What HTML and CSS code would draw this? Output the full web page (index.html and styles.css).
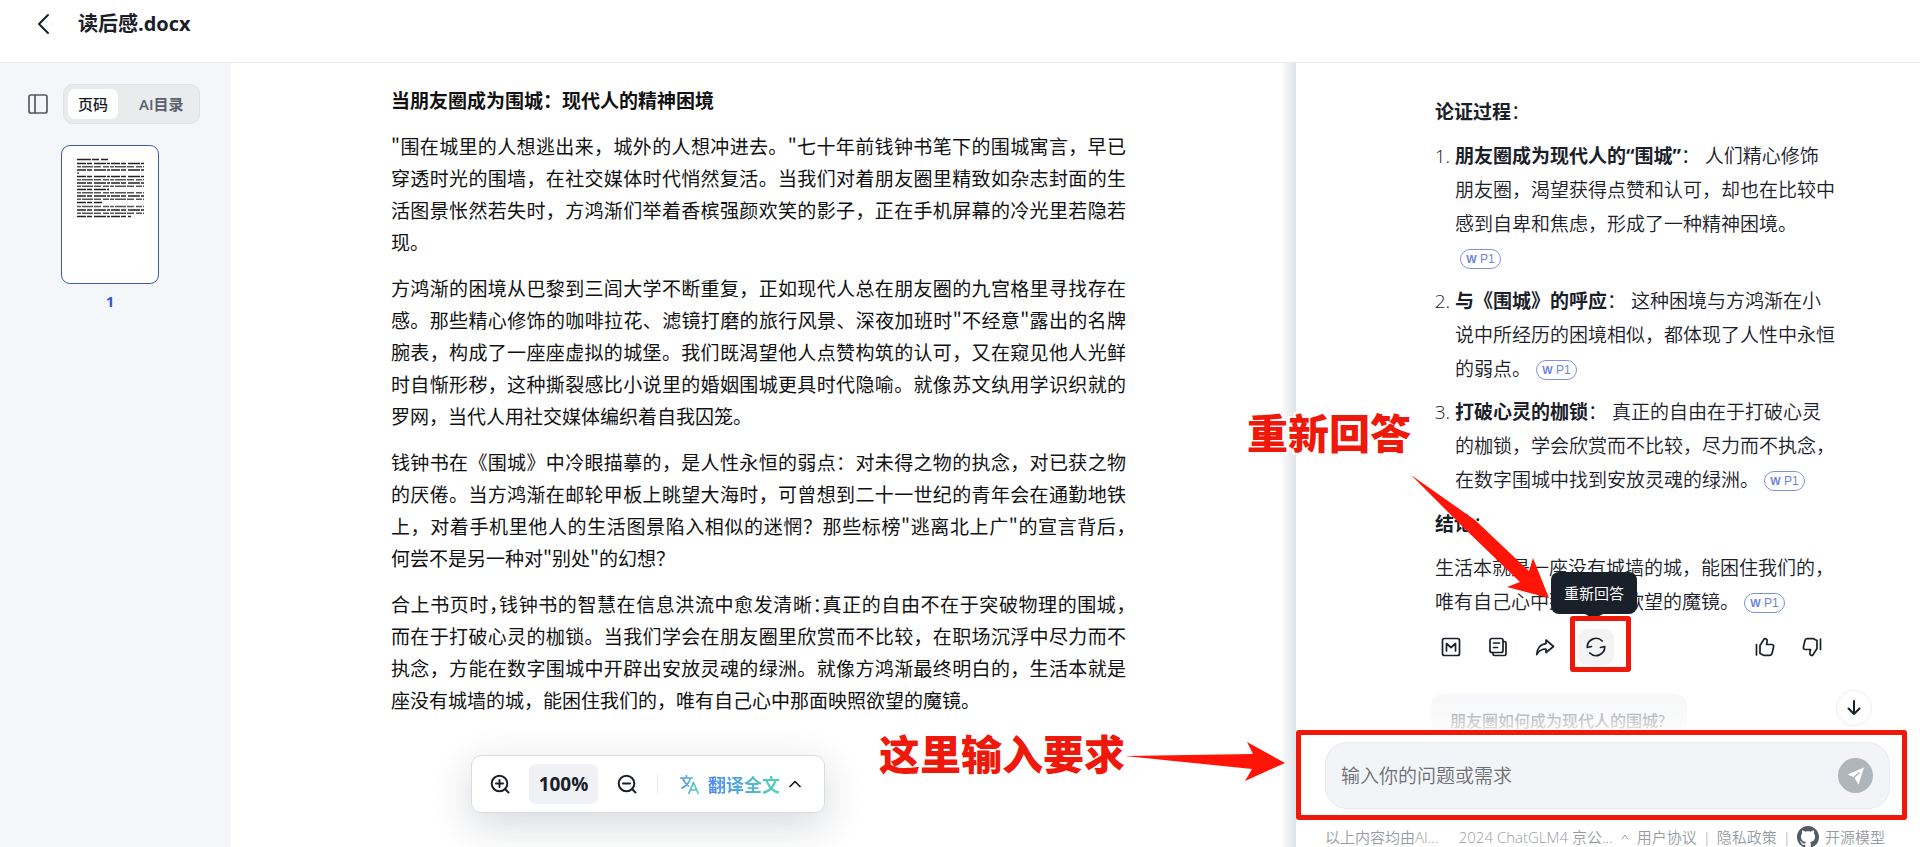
FILE: index.html
```html
<!DOCTYPE html>
<html lang="zh-CN">
<head>
<meta charset="utf-8">
<title>读后感.docx</title>
<link rel="stylesheet" href="styles.css">
</head>
<body>
<header class="topbar">
  <button class="icon-btn back" aria-label="返回"><svg width="14" height="22" viewBox="0 0 14 22"><path d="M12 2 3 11l9 9"/></svg></button>
  <h1 class="file-name">读后感.docx</h1>
</header>
<div class="workspace">
  <div class="reader">
    <aside class="sidebar">
      <div class="side-head">
        <button class="icon-btn panel-toggle" aria-label="侧栏"><svg width="20" height="20" viewBox="0 0 20 20"><rect x="1" y="1" width="18" height="18" rx="2"/><path d="M7 1v18"/></svg></button>
        <div class="tabs">
          <button class="tab tab-active">页码</button>
          <button class="tab">AI目录</button>
        </div>
      </div>
      <a class="thumb" href="#page-1" aria-label="第 1 页">
        <svg width="68" height="60" viewBox="0 0 68 60">
          <path class="t-head" d="M0 1.500H31"/>
          <path class="t-a" d="M0 5.500H67M0 12H67M0 18.500H67M0 25H67M0 31.500H32M0 38H67M0 44.500H25M0 52H67M0 58.500H54"/>
          <path class="t-b" d="M0 8.700H67M0 15H2M0 21.700H67M0 28.300H67M0 34.700H67M0 41.300H67M0 48.500H67M0 55.300H67"/>
        </svg>
      </a>
      <div class="thumb-no">1</div>
    </aside>
    <main class="doc" id="page-1">
      <h2>当朋友圈成为围城：现代人的精神困境</h2>
      <p><span>"围在城里的人想逃出来，城外的人想冲进去。"七十年前钱钟书笔下的围城寓言，早已</span><span>穿透时光的围墙，在社交媒体时代悄然复活。当我们对着朋友圈里精致如杂志封面的生</span><span>活图景怅然若失时，方鸿渐们举着香槟强颜欢笑的影子，正在手机屏幕的冷光里若隐若</span><span>现。</span></p>
      <p><span>方鸿渐的困境从巴黎到三闾大学不断重复，正如现代人总在朋友圈的九宫格里寻找存在</span><span>感。那些精心修饰的咖啡拉花、滤镜打磨的旅行风景、深夜加班时"不经意"露出的名牌</span><span>腕表，构成了一座座虚拟的城堡。我们既渴望他人点赞构筑的认可，又在窥见他人光鲜</span><span>时自惭形秽，这种撕裂感比小说里的婚姻围城更具时代隐喻。就像苏文纨用学识织就的</span><span>罗网，当代人用社交媒体编织着自我囚笼。</span></p>
      <p><span>钱钟书在《围城》中冷眼描摹的，是人性永恒的弱点：对未得之物的执念，对已获之物</span><span>的厌倦。当方鸿渐在邮轮甲板上眺望大海时，可曾想到二十一世纪的青年会在通勤地铁</span><span>上，对着手机里他人的生活图景陷入相似的迷惘？那些标榜"逃离北上广"的宣言背后<i>，</i></span><span>何尝不是另一种对"别处"的幻想？</span></p>
      <p><span>合上书页时<i>，</i>钱钟书的智慧在信息洪流中愈发清晰<i>：</i>真正的自由不在于突破物理的围城<i>，</i></span><span>而在于打破心灵的枷锁。当我们学会在朋友圈里欣赏而不比较，在职场沉浮中尽力而不</span><span>执念，方能在数字围城中开辟出安放灵魂的绿洲。就像方鸿渐最终明白的，生活本就是</span><span>座没有城墙的城，能困住我们的，唯有自己心中那面映照欲望的魔镜。</span></p>
    </main>
    <div class="splitter"></div>
    <div class="toolbar">
      <button class="icon-btn" aria-label="放大"><svg width="20" height="20" viewBox="0 0 20 20"><circle cx="9.500" cy="9.500" r="7.800"/><path d="M15 15l3.500 3.500M9.500 6v7M6 9.500h7"/></svg></button>
      <button class="zoom-value">100%</button>
      <button class="icon-btn" aria-label="缩小"><svg width="20" height="20" viewBox="0 0 20 20"><circle cx="9.500" cy="9.500" r="7.800"/><path d="M15 15l3.500 3.500M6 9.500h7"/></svg></button>
      <span class="divider"></span>
      <button class="translate">
        <svg width="19" height="19" viewBox="0 0 19 19"><defs><linearGradient id="tg" x1="0" x2="1"><stop offset="0" stop-color="#5b92ee"/><stop offset="1" stop-color="#54d1b4"/></linearGradient></defs><path stroke="url(#tg)" d="M.5 3h12M6.500.5V3M2 13c5-2.500 7.500-5.500 8.300-10M2.800 3c1.200 4 3 6 5.700 8M8.800 18.500 13.500 7.500l4.700 11M10.500 15h6"/></svg>
        <span>翻译全文</span>
        <svg class="caret" width="12" height="8" viewBox="0 0 12 8"><path d="M1 6.500 6 1.500l5 5"/></svg>
      </button>
    </div>
  </div>
  <section class="chat">
    <div class="messages">
      <div class="answer">
        <p><strong>论证过程</strong>：</p>
        <ol>
          <li><strong>朋友圈成为现代人的“围城”</strong>： 人们精心修饰<br>朋友圈，渴望获得点赞和认可，却也在比较中<br>感到自卑和焦虑，形成了一种精神困境。<br><a class="ref" href="#page-1"><b>W</b> P1</a></li>
          <li><strong>与《围城》的呼应</strong>： 这种困境与方鸿渐在小<br>说中所经历的困境相似，都体现了人性中永恒<br>的弱点。<a class="ref" href="#page-1"><b>W</b> P1</a></li>
          <li><strong>打破心灵的枷锁</strong>： 真正的自由在于打破心灵<br>的枷锁，学会欣赏而不比较，尽力而不执念，<br>在数字围城中找到安放灵魂的绿洲。<a class="ref" href="#page-1"><b>W</b> P1</a></li>
        </ol>
        <p><strong>结论</strong>：</p>
        <p>生活本就是一座没有城墙的城，能困住我们的，<br>唯有自己心中那面映照欲望的魔镜。<a class="ref" href="#page-1"><b>W</b> P1</a></p>
      </div>
      <div class="actions">
        <button class="icon-btn" aria-label="复制 Markdown"><svg width="20" height="20" viewBox="0 0 20 20"><rect x="1.500" y="1.500" width="17" height="17" rx="2"/><path d="M5.500 14V6.500l4.500 4 4.500-4V14"/></svg></button>
        <button class="icon-btn" aria-label="复制"><svg width="20" height="20" viewBox="0 0 20 20"><rect x="2" y="1.500" width="13" height="14" rx="2"/><path d="M15 4.500h1.500a1.500 1.500 0 0 1 1.500 1.500v11a1.500 1.500 0 0 1-1.500 1.500H6.500A1.500 1.500 0 0 1 5 17v-1.500M5.500 6h6M5.500 10.500h4"/></svg></button>
        <button class="icon-btn" aria-label="分享"><svg width="20" height="20" viewBox="0 0 20 20"><path d="M11 3l7.500 6.500L11 15.500V12c-4 0-7 1.500-9.300 5.500C2 12 5 7.300 11 6.700z"/></svg></button>
        <span class="redo-wrap">
          <button class="icon-btn redo" aria-label="重新回答"><svg width="20" height="20" viewBox="0 0 20 20"><path d="M5.500 9.500 1.300 10.500A8.700 8.700 0 0 1 16.200 4M14.500 10.500l4.200-1A8.700 8.700 0 0 1 3.800 16"/></svg></button>
          <span class="tooltip" role="tooltip">重新回答</span>
        </span>
        <span class="spacer"></span>
        <button class="icon-btn" aria-label="赞"><svg width="20" height="20" viewBox="0 0 20 20"><path d="M1.500 7.500v10.500M5 8.500l4.500-7c2 0 3 1.300 2.600 3l-.6 3h5.200c1.500 0 2.200 1 1.900 2.300l-1.500 6.500c-.3 1.300-1.100 2-2.300 2H8.500L5 16.500z"/></svg></button>
        <button class="icon-btn" aria-label="踩"><svg width="20" height="20" viewBox="0 0 20 20"><path d="M18.500 2v10.500M15 11.500l-4.500 7c-2 0-3-1.300-2.600-3l.6-3H3.300c-1.500 0-2.200-1-1.900-2.300l1.500-6.500c.3-1.300 1.100-2 2.300-2h6.300L15 3.500z"/></svg></button>
      </div>
      <button class="suggestion">朋友圈如何成为现代人的围城?</button>
      <div class="fade"></div>
      <button class="icon-btn to-bottom" aria-label="回到底部"><svg width="16" height="18" viewBox="0 0 16 18"><path d="M8 2v13M2.500 9.500 8 15l5.500-5.500"/></svg></button>
    </div>
    <form class="composer">
      <input type="text" aria-label="输入你的问题或需求" placeholder="输入你的问题或需求">
      <button class="send" type="button" aria-label="发送"><svg width="20" height="20" viewBox="0 0 20 20"><path d="M18 1.500 1.500 8.500 8 11.300 12.500 18.500z"/><path class="slit" d="M8 11.300 13 7"/></svg></button>
    </form>
    <footer class="legal">
      <span>以上内容均由AI...</span>
      <span class="licence">2024 ChatGLM4 京公...</span>
      <svg class="caret" width="8" height="6" viewBox="0 0 8 6"><path d="M1 5l3-4 3 4"/></svg>
      <a href="#terms">用户协议</a><span>|</span><a href="#privacy">隐私政策</a><span>|</span>
      <a class="github" href="#models"><svg width="22" height="22" viewBox="0 0 16 16"><path d="M8 0C3.580 0 0 3.580 0 8c0 3.540 2.290 6.530 5.470 7.590.4.070.55-.17.55-.38 0-.19-.01-.82-.01-1.490-2.010.37-2.530-.49-2.690-.94-.09-.23-.48-.94-.82-1.130-.28-.15-.68-.52-.01-.53.63-.01 1.080.58 1.230.82.72 1.210 1.870.87 2.330.66.07-.52.28-.87.51-1.070-1.780-.2-3.640-.89-3.640-3.950 0-.87.31-1.590.82-2.150-.08-.2-.36-1.020.08-2.120 0 0 .67-.21 2.200.82.64-.18 1.320-.27 2-.27s1.360.09 2 .27c1.530-1.040 2.200-.82 2.200-.82.44 1.100.16 1.920.08 2.120.51.56.82 1.270.82 2.150 0 3.070-1.870 3.750-3.650 3.950.29.25.54.73.54 1.480 0 1.070-.01 1.930-.01 2.200 0 .21.15.46.55.38A8.010 8.010 0 0 0 16 8c0-4.420-3.580-8-8-8z"/></svg>开源模型</a>
    </footer>
  </section>
</div>
<div class="marks">
  <svg class="arrows" width="1920" height="847" viewBox="0 0 1920 847"><path d="M1411 475 1475 520 1529 571 1533 558 1549 598 1507 587 1520 582 1468 532z"/><path d="M1125 756 1253 754 1247 742 1285 763 1245 781 1252 769z"/></svg>
  <span class="note note-redo">重新回答</span>
  <span class="note note-input">这里输入要求</span>
  <span class="frame frame-redo"></span>
  <span class="frame frame-input"></span>
</div>
</body>
</html>
```

FILE: styles.css
```css
* { box-sizing: border-box; }
body {
  margin: 0;
  height: 100vh;
  display: flex;
  flex-direction: column;
  overflow: hidden;
  position: relative;
  background: #fff;
  color: #1a2029;
  font-family: "Open Sans", "Noto Sans CJK SC", sans-serif;
}
button { font: inherit; color: inherit; border: 0; background: none; padding: 0; cursor: pointer; }
a { color: inherit; text-decoration: none; }
svg { display: block; fill: none; stroke: currentColor; stroke-width: 1.7; stroke-linecap: round; stroke-linejoin: round; }
.icon-btn { display: flex; align-items: center; justify-content: center; }

.topbar {
  flex: none;
  height: 63px;
  padding: 0 0 14px 36px;
  display: flex;
  align-items: center;
  gap: 28px;
  border-bottom: 1px solid #e8eaec;
}
.back svg { stroke-width: 2; }
.file-name { margin: 0; font-size: 20px; line-height: 28px; font-weight: 700; }

.workspace { flex: 1; min-height: 0; display: flex; }
.reader { flex: 1; min-width: 0; display: flex; position: relative; }
.sidebar { flex: 0 0 231px; background: #f4f6f9; padding: 21px 0 0 28px; }
.side-head { display: flex; align-items: center; gap: 15px; }
.panel-toggle { color: #555c66; }
.tabs { display: flex; padding: 4px; border: 1px solid #dfe0e3; border-radius: 10px; background: #e9ebed; }
.tab { height: 30px; padding: 0 10px; border-radius: 7px; font-size: 15px; line-height: 28px; font-weight: 600; color: #59616c; }
.tab + .tab { padding: 0 11px 0 21px; }
.tab-active { background: #fff; color: #14181f; font-weight: 500; }
.thumb {
  display: block;
  width: 98px;
  height: 139px;
  margin: 21px 0 0 33px;
  padding: 12px 0 0 15px;
  border: 1px solid #3f5ba9;
  border-radius: 9px;
  background: #fff;
}
.thumb svg { stroke: #222; stroke-linecap: butt; stroke-width: 1.6; }
.t-head { stroke-dasharray: 14 1 7 2; }
.t-a { stroke-dasharray: 9 1 5 2 12 1 3 1; }
.t-b { stroke-dasharray: 4 1 11 1 7 2 6 1; stroke: #555; }
.thumb-no { margin: 6px 0 0 33px; width: 98px; text-align: center; font-size: 15px; line-height: 22px; font-weight: 700; color: #3456d6; }

.doc { flex: 1; min-width: 0; padding: 21px 156px 0 160px; color: #111; font-family: "Noto Sans CJK SC", sans-serif; font-size: 19px; line-height: 32px; white-space: nowrap; }
.doc h2 { margin: 0 0 14px; font-size: 19px; font-weight: 700; line-height: 32px; }
.doc p { margin: 0 0 14px; }
.doc p span { display: block; text-align: justify; text-align-last: justify; white-space: normal; }
.doc p span:last-child { text-align-last: start; }
.doc i { font-style: normal; font-feature-settings: "halt"; }
.splitter { flex: 0 0 14px; background: linear-gradient(to right, #fdfdfe, #f2f3f5 30%, #dfe2e5); }

.toolbar {
  position: absolute;
  left: 50%;
  bottom: 34px;
  transform: translateX(-50%);
  display: flex;
  align-items: center;
  height: 58px;
  padding: 0 23px 0 18px;
  border: 1px solid #d9dbdf;
  border-radius: 10px;
  background: #fff;
  box-shadow: 0 12px 40px rgba(30, 40, 60, .18);
  white-space: nowrap;
}
.toolbar svg { stroke-width: 2; }
.zoom-value { margin: 0 19px; width: 69px; height: 40px; border-radius: 7px; background: #f0f1f4; font-size: 19px; font-weight: 700; }
.divider { width: 1px; height: 20px; margin: 0 22px 0 20px; background: #e6e8eb; }
.translate { display: flex; align-items: center; gap: 9px; font-size: 18px; font-weight: 700; }
.translate svg { stroke-width: 1.7; }
.translate span { background: linear-gradient(to right, #4c86f5, #56d3b4); -webkit-background-clip: text; background-clip: text; color: transparent; }

.chat { flex: 0 0 624px; min-width: 0; display: flex; flex-direction: column; background: #fff; }
.messages { flex: 1; min-height: 0; overflow: hidden; position: relative; padding: 32px 90px 0 135px; }
.answer { padding-left: 4px; font-size: 19px; line-height: 34px; font-weight: 350; white-space: nowrap; }
.answer p { margin: 0 0 10px; }
.answer ol { margin: 0 0 10px; padding-left: 20px; }
.answer li + li { margin-top: 9px; }
.answer strong { font-weight: 700; }
.ref {
  display: inline-block;
  width: 41px;
  height: 20px;
  margin-left: 5px;
  vertical-align: 2px;
  border: 1px solid #7d92d8;
  border-radius: 10px;
  text-align: center;
  font: 12px/18px "Liberation Sans", sans-serif;
  color: #6c85d8;
}
.ref b { font-size: 11px; }
.actions { display: flex; align-items: center; gap: 11px; margin: 0 0 29px 2px; }
.actions .icon-btn { width: 36px; height: 36px; border-radius: 9px; }
.redo-wrap { position: relative; padding-left: 4px; }
.actions .redo { background: #f3f3f4; }
.spacer { flex: 1; }
.tooltip {
  position: absolute;
  bottom: 51px;
  left: 50%;
  transform: translateX(-50%);
  padding: 0 13px;
  border-radius: 8px;
  background: #1a202a;
  color: #fff;
  font-size: 15px;
  line-height: 42px;
  white-space: nowrap;
}
.tooltip::after { content: ""; position: absolute; left: 50%; top: 100%; margin-left: -9px; border: 9px solid transparent; border-top: 5px solid #1a202a; border-bottom: 0; }
.suggestion { padding: 0 22px 0 19px; height: 52px; border-radius: 12px; background: #f1f2f4; font-size: 16px; font-weight: 500; color: #59606a; white-space: nowrap; }
.fade { position: absolute; left: 0; right: 0; bottom: 0; height: 50px; background: linear-gradient(to bottom, rgba(255, 255, 255, .4), rgba(255, 255, 255, .6) 50%, #fff); }
.to-bottom { position: absolute; right: 48px; bottom: 16px; width: 36px; height: 36px; border: 1px solid #eceef0; border-radius: 50%; background: #fff; }
.to-bottom svg { stroke-width: 2; }

.composer {
  flex: none;
  display: flex;
  align-items: center;
  height: 67px;
  margin: 0 30px 0 29px;
  padding: 0 16px 0 15px;
  border: 1px solid #e8eaed;
  border-radius: 22px;
  background: #f3f4f8;
}
.composer input { flex: 1; min-width: 0; border: 0; outline: 0; background: none; padding: 0; font: 350 19px/28px "Open Sans", "Noto Sans CJK SC", sans-serif; }
.composer input::placeholder { color: #6c6f75; opacity: 1; }
.send { width: 35px; height: 35px; border-radius: 50%; background: #b0b5bb; display: flex; align-items: center; justify-content: center; }
.send svg { fill: #fff; stroke: none; }
.send .slit { stroke: #b0b5bb; stroke-width: 1.5; }
.legal { flex: none; display: flex; align-items: center; gap: 6px; height: 38px; padding: 17px 35px 0 29px; font-size: 15px; line-height: 20px; font-weight: 350; color: #979ca4; white-space: nowrap; }
.licence { margin-left: auto; }
.legal .caret { stroke-width: 1; margin: 0 2px; }
.github { display: flex; align-items: center; gap: 6px; }
.github svg { fill: #555b66; stroke: none; }

.marks { position: absolute; inset: 0; pointer-events: none; color: #ee190b; }
.arrows { position: absolute; left: 0; top: 0; fill: #ff1408; stroke: none; }
.note { position: absolute; font-family: "Noto Sans CJK SC", sans-serif; font-size: 41px; line-height: 50px; font-weight: 900; white-space: nowrap; text-shadow: 0 0 2px #fff, 2px 2px 0 #fff, -2px -2px 0 #fff, 2px -2px 0 #fff, -2px 2px 0 #fff; }
.note-redo { left: 1247px; top: 406px; }
.note-input { left: 879px; top: 727px; }
.frame { position: absolute; border: 5px solid #ee190b; border-radius: 3px; }
.frame-redo { left: 1570px; top: 616px; width: 61px; height: 56px; }
.frame-input { left: 1296px; top: 730px; width: 611px; height: 90px; }
```
